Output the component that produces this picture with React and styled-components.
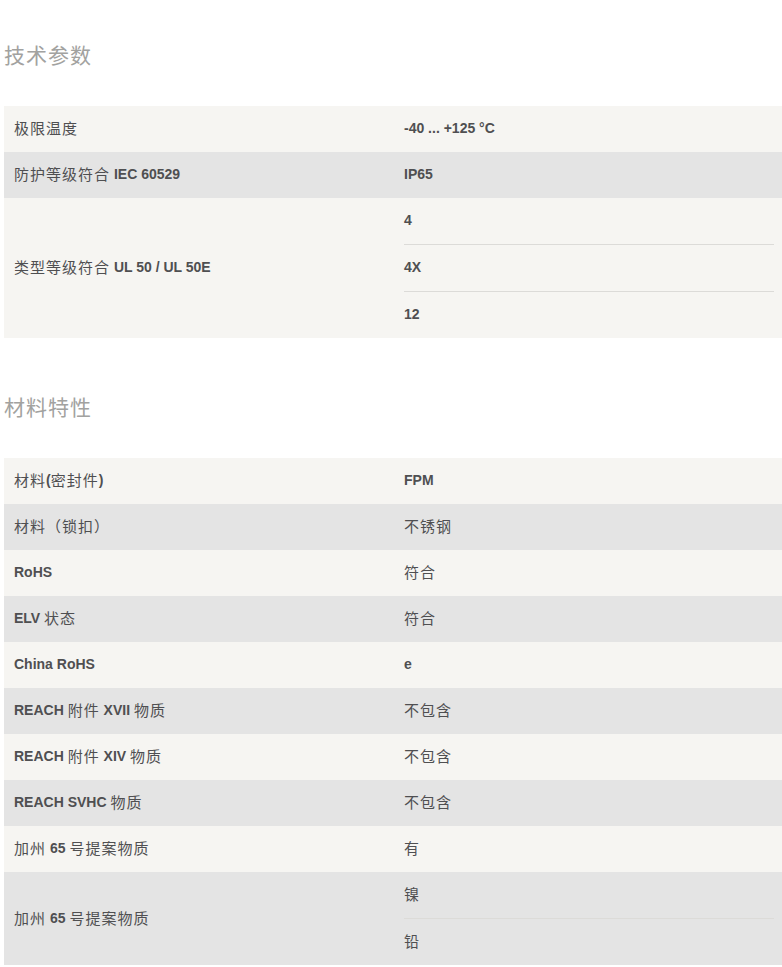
import React from 'react';
import styled, { createGlobalStyle } from 'styled-components';

const sections = [
  {
    title: '技术参数',
    rows: [
      { label: '极限温度', values: ['-40 ... +125 °C'] },
      { label: '防护等级符合 IEC 60529', values: ['IP65'] },
      { label: '类型等级符合 UL 50 / UL 50E', values: ['4', '4X', '12'] },
    ],
  },
  {
    title: '材料特性',
    rows: [
      { label: '材料(密封件)', values: ['FPM'] },
      { label: '材料（锁扣）', values: ['不锈钢'] },
      { label: 'RoHS', values: ['符合'] },
      { label: 'ELV 状态', values: ['符合'] },
      { label: 'China RoHS', values: ['e'] },
      { label: 'REACH 附件 XVII 物质', values: ['不包含'] },
      { label: 'REACH 附件 XIV 物质', values: ['不包含'] },
      { label: 'REACH SVHC 物质', values: ['不包含'] },
      { label: '加州 65 号提案物质', values: ['有'] },
      { label: '加州 65 号提案物质', values: ['镍', '铅'] },
    ],
  },
];

// latin runs are set bold, CJK runs regular and a touch larger
function MixedText({ text }) {
  const parts = text.split(/([\u4e00-\u9fff\uff08\uff09]+)/).filter(Boolean);
  return parts.map((part, i) =>
    /[\u4e00-\u9fff\uff08\uff09]/.test(part) ? (
      <Cjk key={i}>{part}</Cjk>
    ) : (
      <Latin key={i}>{part}</Latin>
    )
  );
}

function SpecTable({ rows }) {
  return (
    <Table>
      <tbody>
        {rows.map((row, i) => (
          <Row key={i} $odd={i % 2 === 1}>
            <LabelCell>
              <MixedText text={row.label} />
            </LabelCell>
            <ValueCell>
              {row.values.map((v, j) => (
                <ValueLine key={j}>
                  <span>
                    <MixedText text={v} />
                  </span>
                </ValueLine>
              ))}
            </ValueCell>
          </Row>
        ))}
      </tbody>
    </Table>
  );
}

export default function App() {
  return (
    <>
      <GlobalStyle />
      <Page>
        {sections.map(section => (
          <Section key={section.title}>
            <Heading>{section.title}</Heading>
            <SpecTable rows={section.rows} />
          </Section>
        ))}
      </Page>
    </>
  );
}

const GlobalStyle = createGlobalStyle`
  html, body {
    margin: 0;
    padding: 0;
    background: #fff;
    overflow-x: hidden;
  }
  body {
    font-family: "Liberation Sans", "Noto Sans CJK SC", sans-serif;
    color: #4f4f51;
  }
`;

const Page = styled.div`
  padding: 0 0 0 4px;
  width: 780px;
`;

const Section = styled.section`
  display: flex;
  flex-direction: column;

  & + & {
    margin-top: 14px;
  }
`;

const Heading = styled.h2`
  margin: 39px 0 37px;
  height: 30px;
  line-height: 30px;
  font-family: "Noto Sans CJK SC", sans-serif;
  font-size: 21px;
  letter-spacing: 1px;
  font-weight: 400;
  color: #a2a2a0;
`;

const Table = styled.table`
  width: 780px;
  border-collapse: collapse;
  table-layout: fixed;
`;

const Row = styled.tr`
  background: ${props => (props.$odd ? '#e4e4e4' : '#f6f5f2')};
`;

const LabelCell = styled.td`
  width: 50%;
  height: 44px;
  padding: 0 10px 2px;
  vertical-align: middle;
  line-height: 20px;
`;

const ValueCell = styled.td`
  width: 50%;
  padding: 0 10px;
  vertical-align: middle;
  line-height: 20px;
`;

const ValueLine = styled.div`
  height: 44px;
  display: flex;
  align-items: center;
  padding-bottom: 2px;

  & + & {
    border-top: 1px solid #dcdbd8;
  }
`;

const Latin = styled.span`
  font-family: "Liberation Sans", sans-serif;
  font-size: 14px;
  font-weight: 700;
  white-space: pre;
`;

const Cjk = styled.span`
  font-family: "Noto Sans CJK SC", sans-serif;
  font-size: 15px;
  letter-spacing: 1px;
  font-weight: 400;
  vertical-align: -1px;
`;
